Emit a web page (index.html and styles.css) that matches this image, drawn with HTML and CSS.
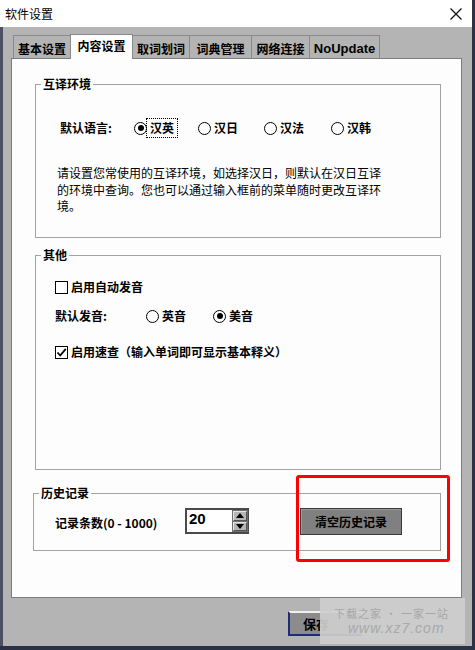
FILE: index.html
```html
<!DOCTYPE html>
<html lang="zh">
<head>
<meta charset="utf-8">
<title>软件设置</title>
<link rel="stylesheet" href="styles.css">
</head>
<body>
<div class="window">
  <div class="titlebar">
    <span class="title">软件设置</span>
    <svg class="close" width="12" height="12" viewBox="0 0 12 12"><path d="M0.5 0.5 L11.5 11.5 M11.5 0.5 L0.5 11.5" stroke="#111" stroke-width="1.3" fill="none"/></svg>
  </div>
  <div class="body">
    <div class="tabs">
      <div class="tab w57">基本设置</div>
      <div class="tab w62 active">内容设置</div>
      <div class="tab w57">取词划词</div>
      <div class="tab w62">词典管理</div>
      <div class="tab w58">网络连接</div>
      <div class="tab w70 latin">NoUpdate</div>
    </div>
    <div class="panel">
      <div class="group g1">
        <span class="group-title">互译环境</span>
        <div class="g1-body">
          <div class="row">
            <span class="lbl lang-lbl">默认语言:</span>
            <span class="opt o1"><span class="radio on"></span><span class="focus">汉英</span></span>
            <span class="opt o2"><span class="radio"></span><span>汉日</span></span>
            <span class="opt o3"><span class="radio"></span><span>汉法</span></span>
            <span class="opt"><span class="radio"></span><span>汉韩</span></span>
          </div>
          <p class="desc">请设置您常使用的互译环境，如选择汉日，则默认在汉日互译的环境中查询。您也可以通过输入框前的菜单随时更改互译环境。</p>
        </div>
      </div>
      <div class="group g2">
        <span class="group-title">其他</span>
        <div class="g2-body">
          <div class="row"><span class="opt"><span class="check"></span><span>启用自动发音</span></span></div>
          <div class="row r2">
            <span class="lbl voice-lbl">默认发音:</span>
            <span class="opt o-uk"><span class="radio"></span><span>英音</span></span>
            <span class="opt"><span class="radio on"></span><span>美音</span></span>
          </div>
          <div class="row r3"><span class="opt"><span class="check on"><svg width="11" height="11" viewBox="0 0 11 11"><path d="M1.5 5.5 L4.2 8.5 L9.8 1.8" stroke="#000" stroke-width="1.8" fill="none"/></svg></span><span>启用速查（输入单词即可显示基本释义）</span></span></div>
        </div>
      </div>
      <div class="group g3">
        <span class="group-title">历史记录</span>
        <div class="g3-body">
          <span class="lbl count-lbl">记录条数(0 - 1000)</span>
          <div class="spin">
            <span class="spin-val">20</span>
            <div class="spin-btns">
              <span class="spin-btn"><svg width="8" height="5" viewBox="0 0 8 5"><path d="M0 5 L4 0 L8 5 Z" fill="#000"/></svg></span>
              <span class="spin-btn"><svg width="8" height="5" viewBox="0 0 8 5"><path d="M0 0 L4 5 L8 0 Z" fill="#000"/></svg></span>
            </div>
          </div>
          <button class="clear-btn">清空历史记录</button>
        </div>
      </div>
    </div>
    <div class="footer">
      <button class="save-btn">保存</button>
    </div>
  </div>
  <div class="highlight"></div>
  <div class="watermark"><span class="wm1">下载之家 · 一家一站</span><span class="wm2">www.xz7.com</span></div>
</div>
</body>
</html>
```

FILE: styles.css
```css
* { box-sizing: border-box; }

body {
  margin: 0;
  width: 475px;
  height: 650px;
  overflow: hidden;
  background: #2b3245;
  font-family: "Noto Sans CJK SC", "Liberation Sans", sans-serif;
  color: #000;
}

.window {
  position: relative;
  width: 472px;
  height: 646px;
  background: #b4b4b4;
  display: flex;
  flex-direction: column;
}

.titlebar {
  height: 27px;
  background: #ffffff;
  display: flex;
  align-items: center;
  justify-content: space-between;
  padding: 0 10px 0 5px;
  flex: none;
}

.title {
  font-size: 12px;
  line-height: 14px;
}

.body {
  flex: 1;
  border-left: 3px solid #4b5162;
  padding-top: 8px;
  display: flex;
  flex-direction: column;
}

.tabs {
  display: flex;
  align-items: flex-end;
  height: 23px;
  margin-left: 10px;
}

.tab {
  height: 23px;
  border: 1px solid #8a8a8a;
  border-bottom: none;
  margin-left: -1px;
  background: #b4b4b4;
  font-size: 12px;
  font-weight: 700;
  line-height: 14px;
  display: flex;
  align-items: center;
  justify-content: center;
  padding-top: 3px;
}

.tab:first-child { margin-left: 0; }

.tab.active {
  height: 25px;
  margin-bottom: -1px;
  background: #fdfdfd;
  position: relative;
  z-index: 1;
  padding-top: 0;
  padding-bottom: 3px;
}

.tab.latin {
  font-family: "Liberation Sans", sans-serif;
  font-size: 13px;
}

.w57 { width: 58px; }
.w58 { width: 59px; }
.w62 { width: 63px; }
.w70 { width: 71px; }

.panel {
  margin-left: 8px;
  width: 451px;
  height: 540px;
  background: #fdfdfd;
  border: 1px solid #7c7c7c;
  flex: none;
}

.group {
  position: relative;
  border: 1px solid #a2a2a2;
}

.group-title {
  position: absolute;
  top: -9px;
  left: 5px;
  padding: 0 2px;
  background: #fdfdfd;
  font-size: 12px;
  font-weight: 700;
  line-height: 16px;
}

.g1 {
  margin: 25px 0 0 23px;
  width: 406px;
  height: 154px;
}

.g2 {
  margin: 17px 0 0 23px;
  width: 406px;
  height: 215px;
}

.g3 {
  margin: 23px 0 0 21px;
  width: 408px;
  height: 58px;
}

.row {
  display: flex;
  align-items: center;
  height: 14px;
  font-size: 12px;
  font-weight: 700;
  line-height: 14px;
}

.lbl { font-weight: 700; font-size: 12px; }

.g1-body { padding: 36px 0 0 24px; }

.lang-lbl { width: 74px; }

.opt {
  display: flex;
  align-items: center;
  gap: 3px;
  font-size: 12px;
  font-weight: 700;
  line-height: 14px;
}

.o1 { width: 64px; }
.o2 { width: 66px; }
.o3 { width: 67px; }

.radio {
  width: 13px;
  height: 13px;
  border: 1.6px solid #000;
  border-radius: 50%;
  display: grid;
  place-items: center;
  background: #fff;
  flex: none;
}

.radio.on::after {
  content: "";
  width: 6px;
  height: 6px;
  border-radius: 50%;
  background: #000;
}

.focus {
  outline: 1px dotted #000;
  outline-offset: 2px;
  padding: 0 1px;
  margin-left: -1px;
}

.desc {
  margin: 30px 0 0 -3px;
  width: 326px;
  font-size: 12px;
  line-height: 16.5px;
  font-weight: 400;
}

.g2-body { padding: 24px 0 0 19px; }

.r2 { margin-top: 15px; }
.r3 { margin-top: 22px; }

.voice-lbl { width: 91px; }
.o-uk { width: 67px; }

.check {
  width: 13px;
  height: 13px;
  border: 1.6px solid #000;
  background: #fff;
  display: grid;
  place-items: center;
  flex: none;
}

.g3-body {
  padding: 12px 0 0 21px;
  display: flex;
  align-items: center;
  height: 42px;
}

.count-lbl {
  width: 130px;
  line-height: 14px;
  font-family: "Noto Sans CJK SC", "Liberation Sans", sans-serif;
  padding-top: 3px;
}

.spin {
  width: 64px;
  height: 26px;
  border: 2px solid #4a4a4a;
  border-right-width: 1px;
  background: #fff;
  display: flex;
}

.spin-val {
  flex: 1;
  font-family: "Liberation Sans", sans-serif;
  font-weight: 700;
  font-size: 15px;
  line-height: 18px;
  padding-left: 2px;
}

.spin-btns {
  width: 16px;
  display: flex;
  flex-direction: column;
  background: #6e6e6e;
  padding: 1px;
  gap: 1px;
}

.spin-btn {
  flex: 1;
  background: #b6b6b6;
  border: 1px solid #e6e6e6;
  border-right-color: #555;
  border-bottom-color: #555;
  display: grid;
  place-items: center;
}

.clear-btn {
  margin-left: 51px;
  width: 102px;
  height: 27px;
  background: #808080;
  border: 1px solid #3a3a3a;
  box-shadow: inset 1px 1px 0 #9a9a9a;
  font-family: "Noto Sans CJK SC", sans-serif;
  font-size: 12px;
  font-weight: 700;
  color: #000;
  padding: 0;
}

.footer {
  display: flex;
  justify-content: flex-end;
  padding: 13px 109px 0 0;
}

.save-btn {
  width: 75px;
  height: 25px;
  background: #8c8c8c;
  border: 2px solid #1d2c7a;
  border-top-color: #f0f0f0;
  border-right-color: #d8d8d8;
  font-family: "Noto Sans CJK SC", sans-serif;
  font-size: 13px;
  font-weight: 700;
  color: #000;
  text-align: left;
  padding: 0 0 0 13px;
}

.highlight {
  position: absolute;
  left: 296px;
  top: 475px;
  width: 154px;
  height: 87px;
  border: 3px solid #ff0000;
  border-radius: 3px;
  pointer-events: none;
}

.watermark {
  position: absolute;
  left: 320px;
  top: 598px;
  width: 145px;
  height: 46px;
  background: rgba(206, 206, 206, 0.92);
  display: flex;
  flex-direction: column;
  align-items: flex-start;
  justify-content: center;
  padding-left: 14px;
  color: #a8a8a8;
  gap: 1px;
}

.wm1 {
  font-size: 11px;
  line-height: 14px;
  letter-spacing: 1px;
}

.wm2 {
  font-family: "Liberation Sans", sans-serif;
  font-size: 14px;
  font-style: italic;
  line-height: 15px;
  letter-spacing: 1px;
  padding-left: 14px;
}
```
